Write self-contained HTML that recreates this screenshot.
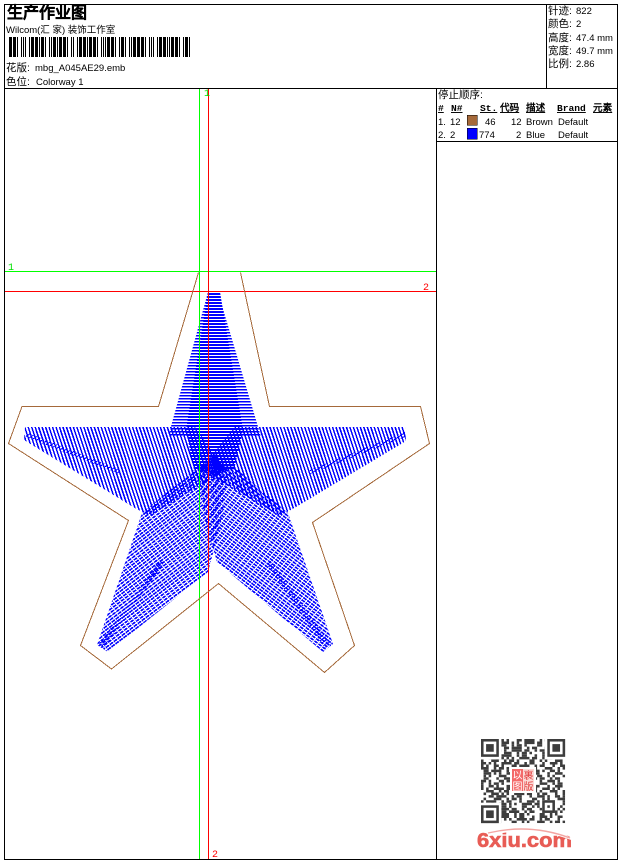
<!DOCTYPE html>
<html lang="zh">
<head>
<meta charset="utf-8">
<title>生产作业图</title>
<style>
html,body{margin:0;padding:0;background:#fff;width:620px;height:860px;overflow:hidden}
svg{display:block}
text{font-family:"Liberation Sans","WenQuanYi Zen Hei",sans-serif;font-size:9.5px;fill:#000}
.c{font-family:"WenQuanYi Zen Hei","Liberation Sans",sans-serif;font-size:10.5px}
.h{font-family:"Liberation Mono","WenQuanYi Zen Hei",monospace;font-size:9.6px;font-weight:bold;text-decoration:underline}
.k{shape-rendering:crispEdges}
.s{stroke:#00f;fill:none;shape-rendering:crispEdges}
.w{stroke:#fff;fill:none;shape-rendering:crispEdges}
.a{stroke-dasharray:3 1 1 2 2 1 1 3 2 1 4 2 1 1 2 3 1 2}
.b{stroke-dasharray:1 1 2 3 1 2 3 1 1 1 1 2 4 1 2 2}
.d{stroke-dasharray:2 2 1 1 1 3 3 2 1 1 2 1 1 4}
</style>
</head>
<body>
<svg width="620" height="860" viewBox="0 0 620 860" xmlns="http://www.w3.org/2000/svg">
<defs>
<clipPath id="top"><polygon points="208,292 218,292 259,430 261,437 169,437 170,430"/></clipPath>
<clipPath id="kite"><polygon points="208,292 220,292 243,430 234,470 194,470 186,430"/></clipPath>
<clipPath id="la"><polygon points="25,427 195,427 226,470 150,516 133,507 24,440"/></clipPath>
<clipPath id="ra"><polygon points="405,427 235,427 200,470 280,516 296,507 406,441"/></clipPath>
<clipPath id="ll"><polygon points="142,513 97,645 108,652 208,572 222,520 228,465 200,465"/></clipPath>
<clipPath id="lr"><polygon points="288,513 333,644 323,652 217,562 205,520 198,465 232,465"/></clipPath>
<clipPath id="spine"><polygon points="26,432 120,470 120,474 26,437"/><polygon points="405,432 310,470 310,474 405,437"/><polygon points="99,644 160,560 164,563 104,648"/><polygon points="331,644 270,560 266,563 325,648"/></clipPath>
<clipPath id="qr"><rect x="0" y="0" width="33" height="33"/></clipPath>
<filter id="soft" x="-5%" y="-5%" width="110%" height="110%"><feGaussianBlur stdDeviation=".15"/></filter>
</defs>

<!-- stitches -->
<line class="s" x1="30" y1="420" x2="270" y2="740" stroke-width="320" stroke-dasharray="1.6 1.2" clip-path="url(#ll)"/>
<line class="w" x1="-50" y1="700" x2="350" y2="400" stroke-width="320" stroke-dasharray="1 4" clip-path="url(#ll)"/>
<line class="s" x1="390" y1="420" x2="150" y2="740" stroke-width="320" stroke-dasharray="1.6 1.2" clip-path="url(#lr)"/>
<line class="w" x1="470" y1="700" x2="70" y2="400" stroke-width="320" stroke-dasharray="1 4" clip-path="url(#lr)"/>
<line class="s" x1="-80" y1="533" x2="300" y2="407" stroke-width="300" stroke-dasharray="1.5 1.8" clip-path="url(#la)"/>
<line class="s" x1="120" y1="533" x2="500" y2="407" stroke-width="300" stroke-dasharray="1.5 1.8" clip-path="url(#ra)"/>
<line class="s" x1="215" y1="290" x2="215" y2="437" stroke-width="100" stroke-dasharray="1.4 1.6" clip-path="url(#top)"/>
<line class="s" x1="215" y1="290" x2="215" y2="470" stroke-width="100" stroke-dasharray="2 1" clip-path="url(#kite)"/>
<line class="s" x1="100" y1="300" x2="340" y2="660" stroke-width="600" stroke-dasharray="1 2" clip-path="url(#spine)"/>

<!-- guides -->
<g class="k" fill="none">
<path stroke="#00ff00" d="M199.5 88V859M4 271.5H436"/>
<path stroke="#ff0000" d="M208.5 88V859M4 291.5H436"/>
<path stroke="#a5693a" d="M198.5 272.5L158.5 406.5H22L8.5 443.5L128.5 520.5L80.5 645.5L111.5 669L218.5 583.5L324.5 672.5L354.5 645.5L312.5 522.5L429.5 443.5L420.5 406.5H269.5L240.5 272.5"/>
<path stroke="#000" d="M4.5 4.5H617.5V859.5H4.5ZM4.5 88.5H617.5M546.5 4.5V88.5M436.5 88.5V859.5M436.5 141.5H617.5"/>
</g>
<text x="204" y="96" style="font-family:'Liberation Mono',monospace;font-size:10px;fill:#00e000">1</text>
<text x="8" y="270" style="font-family:'Liberation Mono',monospace;font-size:10px;fill:#00e000">1</text>
<text x="423" y="290" style="font-family:'Liberation Mono',monospace;font-size:10px;fill:#f00">2</text>
<text x="212" y="857" style="font-family:'Liberation Mono',monospace;font-size:10px;fill:#f00">2</text>

<!-- header -->
<text x="7" y="18" style="font-family:'WenQuanYi Zen Hei',sans-serif;font-size:16px;font-weight:bold;stroke:#000;stroke-width:.3">生产作业图</text>
<text x="6" y="33" style="font-size:9.5px">Wilcom(汇 家) 装饰工作室</text>
<line class="k" x1="9" y1="47" x2="191" y2="47" stroke="#000" stroke-width="20" stroke-dasharray="3 1 3 1 1 3 1 1 1 1 1 3 1 1 3 1 3 1 1 1 3 1 1 3 1 1 1 1 3 1 1 1 3 1 3 1 1 3 1 1 1 3 1 1 3 1 3 1 1 1 3 1 3 1 1 3 1 1 1 1 1 1 3 1 3 1 1 3 1 1 3 1 1 3 1 1 1 1 3 1 3 1 3 1 1 3 1 1 1 1 1 3 1 1 3 1 3 1 1 1 1 1 3 1 3 1 1 3 1 1 3 1 1 3 1 1 1 1 3 1"/>
<text x="6" y="71" class="c">花版:</text><text x="35" y="71">mbg_A045AE29.emb</text>
<text x="6" y="85" class="c">色位:</text><text x="36" y="85">Colorway 1</text>

<text x="548" y="14" class="c">针迹:</text><text x="576" y="14">822</text>
<text x="548" y="27" class="c">颜色:</text><text x="576" y="27">2</text>
<text x="548" y="41" class="c">高度:</text><text x="576" y="41">47.4 mm</text>
<text x="548" y="54" class="c">宽度:</text><text x="576" y="54">49.7 mm</text>
<text x="548" y="67" class="c">比例:</text><text x="576" y="67">2.86</text>

<!-- table -->
<text x="438" y="98" class="c">停止顺序:</text>
<text x="438" y="111" class="h">#</text><text x="451" y="111" class="h">N#</text><text x="480" y="111" class="h">St.</text>
<text x="500" y="111" class="h">代码</text><text x="526" y="111" class="h">描述</text><text x="557" y="111" class="h">Brand</text><text x="593" y="111" class="h">元素</text>
<text x="438" y="125">1.</text><text x="450" y="125">12</text><rect class="k" x="467" y="115" width="10" height="10" fill="#a5693a" stroke="#000" stroke-width=".5"/><text x="485" y="125">46</text><text x="511" y="125">12</text><text x="526" y="125">Brown</text><text x="558" y="125">Default</text>
<text x="438" y="138">2.</text><text x="450" y="138">2</text><rect class="k" x="467" y="128" width="10" height="11" fill="#00f" stroke="#000" stroke-width=".5"/><text x="479" y="138">774</text><text x="516" y="138">2</text><text x="526" y="138">Blue</text><text x="558" y="138">Default</text>

<!-- QR -->
<g transform="translate(481 739) scale(2.55)" filter="url(#soft)">
<g clip-path="url(#qr)" stroke="#3c3c3c" stroke-width="1" fill="none">
<line class="a" x1="0" x2="33" y1=".5" y2=".5"/><line class="b" x1="-2" x2="33" y1="1.5" y2="1.5"/><line class="d" x1="-3" x2="33" y1="2.5" y2="2.5"/>
<line class="a" x1="-5" x2="33" y1="3.5" y2="3.5"/><line class="b" x1="-7" x2="33" y1="4.5" y2="4.5"/><line class="d" x1="-1" x2="33" y1="5.5" y2="5.5"/>
<line class="a" x1="-9" x2="33" y1="6.5" y2="6.5"/><line class="b" x1="-4" x2="33" y1="7.5" y2="7.5"/><line class="d" x1="-6" x2="33" y1="8.5" y2="8.5"/>
<line class="b" x1="-11" x2="33" y1="9.5" y2="9.5"/><line class="a" x1="-2" x2="33" y1="10.5" y2="10.5"/><line class="d" x1="-10" x2="33" y1="11.5" y2="11.5"/>
<line class="a" x1="-13" x2="33" y1="12.5" y2="12.5"/><line class="b" x1="-9" x2="33" y1="13.5" y2="13.5"/><line class="d" x1="-3" x2="33" y1="14.5" y2="14.5"/>
<line class="b" x1="-1" x2="33" y1="15.5" y2="15.5"/><line class="a" x1="-7" x2="33" y1="16.5" y2="16.5"/><line class="d" x1="-12" x2="33" y1="17.5" y2="17.5"/>
<line class="a" x1="-4" x2="33" y1="18.5" y2="18.5"/><line class="b" x1="-14" x2="33" y1="19.5" y2="19.5"/><line class="d" x1="-8" x2="33" y1="20.5" y2="20.5"/>
<line class="b" x1="-6" x2="33" y1="21.5" y2="21.5"/><line class="a" x1="-11" x2="33" y1="22.5" y2="22.5"/><line class="d" x1="-5" x2="33" y1="23.5" y2="23.5"/>
<line class="a" x1="-15" x2="33" y1="24.5" y2="24.5"/><line class="b" x1="-3" x2="33" y1="25.5" y2="25.5"/><line class="d" x1="-9" x2="33" y1="26.5" y2="26.5"/>
<line class="b" x1="-12" x2="33" y1="27.5" y2="27.5"/><line class="a" x1="-6" x2="33" y1="28.5" y2="28.5"/><line class="d" x1="-2" x2="33" y1="29.5" y2="29.5"/>
<line class="a" x1="-10" x2="33" y1="30.5" y2="30.5"/><line class="b" x1="-5" x2="33" y1="31.5" y2="31.5"/><line class="d" x1="-13" x2="33" y1="32.5" y2="32.5"/>
</g>
<g fill="#fff" stroke="none"><rect x="0" y="0" width="8" height="8"/><rect x="25" y="0" width="8" height="8"/><rect x="0" y="25" width="8" height="8"/><rect x="24" y="24" width="5" height="5"/></g>
<g fill="none" stroke="#3c3c3c" stroke-width="1"><rect x=".5" y=".5" width="6" height="6"/><rect x="26.5" y=".5" width="6" height="6"/><rect x=".5" y="26.5" width="6" height="6"/><rect x="24.5" y="24.5" width="4" height="4"/></g>
<g fill="#3c3c3c" stroke="none"><rect x="2" y="2" width="3" height="3"/><rect x="28" y="2" width="3" height="3"/><rect x="2" y="28" width="3" height="3"/><rect x="26" y="26" width="1" height="1"/></g>
</g>
<rect x="510" y="767" width="26" height="26" fill="#fff"/>
<rect x="512" y="769" width="22" height="22" fill="#f46a6a"/>
<rect x="523" y="769" width="11" height="11" fill="#fbd9d6"/>
<rect x="523" y="780" width="11" height="11" fill="#fbd9d6"/>
<text x="512.5" y="779" style="font-family:'WenQuanYi Zen Hei',sans-serif;font-size:10px;fill:#fff">以</text>
<text x="512.5" y="790" style="font-family:'WenQuanYi Zen Hei',sans-serif;font-size:10px;fill:#fff">图</text>
<text x="523.5" y="779" style="font-family:'WenQuanYi Zen Hei',sans-serif;font-size:10px;fill:#e23c3c">裹</text>
<text x="523.5" y="790" style="font-family:'WenQuanYi Zen Hei',sans-serif;font-size:10px;fill:#e23c3c">版</text>

<!-- logo -->
<text x="477" y="847" textLength="95" lengthAdjust="spacingAndGlyphs" style="font-size:20px;font-weight:bold;fill:#e85c55;stroke:#e85c55;stroke-width:.6">6xiu.com</text>
<path d="M488 835Q530 823 572 839" fill="none" stroke="#fff" stroke-width="2.5"/>
<path d="M488 833Q530 823 570 838" fill="none" stroke="#f3a5a2" stroke-width="1.4"/>
</svg>
</body>
</html>
